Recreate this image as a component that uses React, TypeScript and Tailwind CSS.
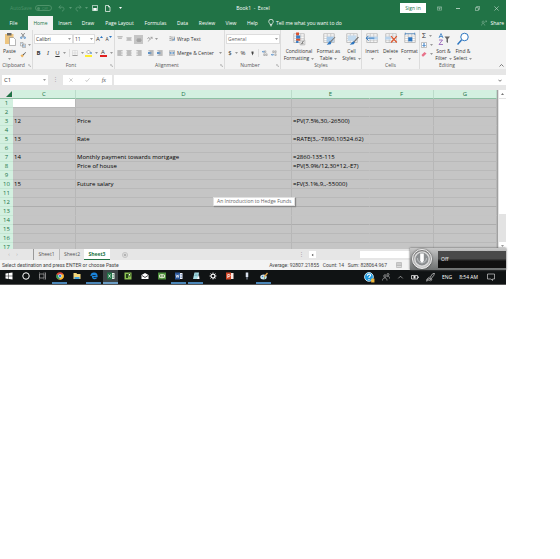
import type { ReactNode } from "react";

const rows: { c?: string; d?: string; e?: string; line: string }[] = [
  { line: "border-[#b9b9b9]" },
  { line: "border-[#b2b2b2]" },
  { c: "12", d: "Price", e: "=PV(7.5%,30,-26500)", line: "border-[#c4c4c4]" },
  { line: "border-[#b2b2b2]" },
  { c: "13", d: "Rate", e: "=RATE(3,,-7890,10524.62)", line: "border-[#b9b9b9]" },
  { line: "border-[#b9b9b9]" },
  { c: "14", d: "Monthly payment towards mortgage", e: "=2860-135-115", line: "border-[#b9b9b9]" },
  { d: "Price of house", e: "=PV(5.9%/12,30*12,-E7)", line: "border-[#b9b9b9]" },
  { line: "border-[#b9b9b9]" },
  { c: "15", d: "Future salary", e: "=FV(3.1%,9,,-55000)", line: "border-[#b9b9b9]" },
  { line: "border-[#b9b9b9]" },
  { line: "border-[#adadad]" },
  { line: "border-[#c4c4c4]" },
  { line: "border-[#adadad]" },
  { line: "border-[#b9b9b9]" },
  { line: "border-[#b9b9b9]" },
  { line: "border-[#b9b9b9]" },
];

function Svg({ className, box, children }: { className: string; box: string; children: ReactNode }) {
  return (
    <svg aria-hidden="true" viewBox={box} className={`shrink-0 ${className}`} fill="none">
      {children}
    </svg>
  );
}

function Caret({ className = "text-[#999]" }: { className?: string }) {
  return (
    <Svg box="0 0 6 4" className={`h-[2px] w-[3px] ${className}`}>
      <path d="M0 0h6L3 4z" fill="currentColor" />
    </Svg>
  );
}

function Btn({ label, className = "", spread, children }: { label?: string; className?: string; spread?: boolean; children?: ReactNode }) {
  return (
    <button
      type="button"
      aria-label={label}
      className={`flex shrink-0 items-center whitespace-nowrap ${spread ? "justify-between" : "justify-center"} ${className}`}
    >
      {children}
    </button>
  );
}

function Group({ name, className, launcher, children }: { name: string; className: string; launcher?: boolean; children: ReactNode }) {
  return (
    <section aria-label={name} className={`flex flex-col border-[#dcdcdc] ${className}`}>
      <div className="h-[31px]">{children}</div>
      <div className="flex h-2 items-center">
        <span className="flex-1 text-center text-[#555]">{name}</span>
        {launcher && (
          <Btn label={`${name} settings`} className="w-[5px]">
            <Svg box="0 0 6 6" className="size-[3px]">
              <path d="M.5 4V.5H4M2 2l3 3M5.500 3v2.500H3" stroke="#999" />
            </Svg>
          </Btn>
        )}
      </div>
    </section>
  );
}

function Big({ icon, first, second, className }: { icon: ReactNode; first: string; second?: string; className: string }) {
  return (
    <button type="button" className={`flex shrink-0 flex-col items-center whitespace-nowrap pt-[2px] text-[#333] ${className}`}>
      {icon}
      <span className="mt-[2px] leading-[7px]">{first}</span>
      <span className="flex h-[7px] items-center gap-[2px] leading-[7px]">
        {second}
        <Caret />
      </span>
    </button>
  );
}

function AlignIcon({ kind, blue }: { kind: "top" | "mid" | "bottom" | "left" | "center" | "right"; blue?: boolean }) {
  const paths = {
    top: "M1 2h14M3 6h10",
    mid: "M1 5h14M3 8h10M1 11h14",
    bottom: "M3 8h10M1 11h14M3 14h10",
    left: "M1 2h14M1 5h10M1 8h14M1 11h10M1 14h14",
    center: "M1 2h14M3 5h10M1 8h14M3 11h10M1 14h14",
    right: "M1 2h14M5 5h10M1 8h14M5 11h10M1 14h14",
  };
  return (
    <Svg box="0 0 16 16" className="size-[6px]">
      <path d={paths[kind]} stroke="#777" strokeWidth="1.500" />
      {blue && <path d="M9 8H1m3-3L1 8l3 3" stroke="#2b75c0" strokeWidth="2.500" />}
    </Svg>
  );
}

function Sheet({ children }: { children?: ReactNode }) {
  return (
    <Svg box="0 0 24 24" className="size-[14px]">
      <path d="M3 3h18v15H3z" fill="#fff" stroke="#aaa" strokeWidth="1.200" />
      <path d="M3 7h18M3 11h18M3 15h18M9 3v15M15 3v15" stroke="#b5b5b5" />
      {children}
    </Svg>
  );
}

function TitleBar() {
  return (
    <header className="flex h-4 items-center whitespace-nowrap text-white">
      <div className="flex flex-1 items-center">
        <label className="flex items-center pl-[10px] text-[#4d9269]">
          <span className="w-[25px]">AutoSave</span>
          <input type="checkbox" className="sr-only" />
          <span className="flex h-[6px] w-[17px] items-center gap-[2px] rounded-full border border-[#4d9269] px-[1px] text-[4px]">
            <span className="size-[3px] rounded-full bg-[#4d9269]" />
            Off
          </span>
        </label>
        <Btn label="Undo" className="ml-[6px] gap-[4px]">
          <Svg box="0 0 16 16" className="size-[7px]">
            <path d="M6 1 2 5l4 4M2 5h8c5 0 5 8-1 9" stroke="#5b9b76" strokeWidth="1.800" />
          </Svg>
          <Caret className="text-[#5b9b76]" />
        </Btn>
        <Btn label="Redo" className="ml-[3px] gap-[3px]">
          <Svg box="0 0 16 16" className="size-[7px]">
            <path d="m10 1 4 4-4 4m4-4H6C1 5 1 13 7 14" stroke="#5b9b76" strokeWidth="1.800" />
          </Svg>
          <Caret className="text-[#5b9b76]" />
        </Btn>
        <Btn label="Save" className="ml-[4px]">
          <Svg box="0 0 14 14" className="size-[6px]">
            <path d="M1 1h12v12H1z" stroke="#fff" strokeWidth="1.500" />
            <path d="M3 7h8v6H3z" fill="#fff" />
          </Svg>
        </Btn>
        <Btn label="New" className="ml-[6px]">
          <Svg box="0 0 14 14" className="size-[7px]">
            <path d="M3 1h6l3 3v9H3zM9 1v3h3" stroke="#fff" strokeWidth="1.400" />
          </Svg>
        </Btn>
        <Btn label="Customize toolbar" className="ml-[8px]">
          <Caret className="text-white" />
        </Btn>
      </div>
      <h1 className="whitespace-pre">Book1  -  Excel</h1>
      <div className="flex flex-1 items-center justify-end">
        <Btn className="mr-[10px] h-[10px] w-[26px] bg-white text-[#217346]">Sign in</Btn>
        <Btn label="Ribbon display" className="w-[6px]">
          <Svg box="0 0 12 12" className="size-[5px]">
            <path d="M1 2h10v8H1zM1 4.500h10M6 9V6M4.500 7 6 5.500 7.500 7" stroke="#cfe2d7" />
          </Svg>
        </Btn>
        <Btn label="Minimize" className="ml-[13px] w-[6px]">
          <span className="h-px w-[4px] bg-[#a9cbb8]" />
        </Btn>
        <Btn label="Restore" className="ml-[13px] w-[6px]">
          <Svg box="0 0 12 12" className="size-[5px]">
            <path d="M1 4h7v7H1zM4 4V1h7v7H8" stroke="#cfe2d7" strokeWidth="1.300" />
          </Svg>
        </Btn>
        <Btn label="Close" className="mr-[7px] ml-[13px] w-[6px]">
          <Svg box="0 0 12 12" className="size-[5px]">
            <path d="m1 1 10 10M11 1 1 11" stroke="#cfe2d7" strokeWidth="1.400" />
          </Svg>
        </Btn>
      </div>
    </header>
  );
}

function Tabs() {
  const tabs: [string, string][] = [
    ["File", "w-[27px]"],
    ["Home", "w-[25px]"],
    ["Insert", "w-[24px]"],
    ["Draw", "w-[22px]"],
    ["Page Layout", "w-[41px]"],
    ["Formulas", "w-[31px]"],
    ["Data", "w-[23px]"],
    ["Review", "w-[26px]"],
    ["View", "w-[22px]"],
    ["Help", "w-[21px]"],
  ];
  return (
    <nav className="flex h-[14px] items-stretch text-white">
      {tabs.map(([name, width]) => (
        <Btn
          key={name}
          className={`${width} ${name === "Home" ? "ml-px bg-[#f3f3f3] text-[#217346]" : ""}`}
        >
          {name}
        </Btn>
      ))}
      <Btn className="ml-[5px] gap-[2px]">
        <Svg box="0 0 12 16" className="h-[8px] w-[6px]">
          <path d="M4 11C4 8 1.500 8 1.500 5a4.500 4.500 0 0 1 9 0c0 3-2.500 3-2.500 6zM4 13.500h4" stroke="#fff" strokeWidth="1.500" />
        </Svg>
        Tell me what you want to do
      </Btn>
      <Btn className="mr-[2px] ml-auto gap-[4px]">
        <Svg box="0 0 14 14" className="size-[6px]">
          <circle cx="5" cy="5" r="2.500" stroke="#9fc5af" />
          <path d="M1 13c0-6 8-6 8 0M9 6l4-4m-3 0h3v3" stroke="#9fc5af" />
        </Svg>
        Share
      </Btn>
    </nav>
  );
}

function Ribbon() {
  return (
    <div className="flex h-[39px] bg-[#f3f3f3] text-[#333]">
      <Group name="Clipboard" className="w-[33px] shrink-0 border-r" launcher>
        <div className="flex">
          <Big
            className="w-[19px]"
            first="Paste"
            icon={
              <Svg box="0 0 24 28" className="h-[14px] w-[12px]">
                <path d="M2 4h17v20H2z" fill="#edc580" />
                <path d="M6 2h9v5H6z" fill="#666" />
                <path d="M11 11h8l4 4v12H11z" fill="#fff" stroke="#777" />
              </Svg>
            }
          />
          <div className="flex flex-col pt-[2px]">
            <Btn label="Cut" className="h-[8px] w-[8px]">
              <Svg box="0 0 14 14" className="size-[6px]">
                <path d="m3 0 7 10M11 0 4 10" stroke="#555" strokeWidth="1.500" />
                <circle cx="3" cy="11" r="2" stroke="#2b75c0" strokeWidth="1.500" />
                <circle cx="11" cy="11" r="2" stroke="#2b75c0" strokeWidth="1.500" />
              </Svg>
            </Btn>
            <Btn label="Copy" className="h-[10px] w-[12px] gap-[2px]">
              <Svg box="0 0 14 14" className="size-[6px]">
                <path d="M1 1h6v8H1zM6 5h7v8H6z" fill="#fff" stroke="#666" />
                <path d="M2.500 4h3M7.500 8h4m-4 2.500h4" stroke="#2b75c0" />
              </Svg>
              <Caret />
            </Btn>
            <Btn label="Format painter" className="h-[9px] w-[8px]">
              <Svg box="0 0 14 14" className="size-[6px]">
                <path d="m1 8 4-3 4 4-4 4z" fill="#edb35c" />
                <path d="m6 5 3-1 4-4 1 1-4 4-1 3z" fill="#555" />
              </Svg>
            </Btn>
          </div>
        </div>
      </Group>

      <Group name="Font" className="w-[82px] shrink-0 border-r" launcher>
        <div className="flex h-[18px] items-center pl-px">
          <Btn label="Font name" spread className="h-[10px] w-[39px] border border-[#ddd] bg-white px-px">
            Calibri <Caret />
          </Btn>
          <Btn label="Font size" spread className="h-[10px] w-[22px] border border-[#ddd] bg-white px-px">
            11 <Caret />
          </Btn>
          <Btn label="Grow font" className="w-[9px] text-[6px]">
            A<Caret className="mb-[4px] rotate-180 text-[#2b75c0]" />
          </Btn>
          <Btn label="Shrink font" className="w-[9px]">
            A<Caret className="mb-[4px] text-[#2b75c0]" />
          </Btn>
        </div>
        <div className="flex h-[10px] items-center pl-px text-[6px]">
          <Btn className="w-[9px] font-bold">B</Btn>
          <Btn className="w-[10px] font-['Liberation_Serif',serif] italic">I</Btn>
          <Btn label="Underline" className="w-[15px] gap-[3px]">
            <span className="underline">U</span>
            <Caret />
          </Btn>
          <span className="mx-px h-[8px] w-px bg-[#ddd]" />
          <Btn label="Borders" className="w-[13px] gap-[3px]">
            <Svg box="0 0 12 12" className="size-[6px]">
              <path d="M1 1h10v10H1zM6 1v10M1 6h10" stroke="#ccc" />
              <path d="M1 11h10" stroke="#888" strokeWidth="1.500" />
            </Svg>
            <Caret />
          </Btn>
          <Btn label="Fill color" className="w-[15px] gap-[3px]">
            <Svg box="0 0 14 16" className="h-[8px] w-[7px]">
              <path d="m3 6 4-4 4 4-4 4z" fill="#fff" stroke="#666" />
              <path d="M12 6v4" stroke="#2b75c0" strokeWidth="2" />
              <path d="M0 12h14v4H0z" fill="#ffed2e" />
            </Svg>
            <Caret />
          </Btn>
          <Btn label="Font color" className="w-[14px] gap-[3px]">
            <span className="flex h-[8px] w-[7px] flex-col items-center border-b-2 border-[#e02020] leading-[6px]">A</span>
            <Caret />
          </Btn>
        </div>
      </Group>

      <Group name="Alignment" className="w-[110px] shrink-0 border-r" launcher>
        <div className="flex h-[18px] items-center">
          <Btn label="Top align" className="h-[9px] w-[9px]"><AlignIcon kind="top" /></Btn>
          <Btn label="Middle align" className="h-[9px] w-[10px]"><AlignIcon kind="mid" /></Btn>
          <Btn label="Bottom align" className="h-[9px] w-[9px] bg-[#c5c5c5]"><AlignIcon kind="bottom" /></Btn>
          <Btn label="Orientation" className="ml-[3px] w-[13px] gap-[2px]">
            <Svg box="0 0 14 14" className="size-[6px]">
              <path d="m2 13 10-10M8 3h4v4M1 7l3-4 3 5" stroke="#888" strokeWidth="1.500" />
            </Svg>
            <Caret />
          </Btn>
          <Btn className="ml-[10px] gap-[2px]">
            <Svg box="0 0 14 14" className="size-[6px]">
              <path d="M1 2h4M1 6h4M1 10h4M7 1v11M12 1v7H8" stroke="#666" strokeWidth="1.300" />
              <path d="M8 10h5V4" stroke="#2b75c0" strokeWidth="1.300" />
            </Svg>
            Wrap Text
          </Btn>
        </div>
        <div className="flex h-[10px] items-center">
          <Btn label="Align left" className="w-[9px]"><AlignIcon kind="left" /></Btn>
          <Btn label="Center" className="w-[10px]"><AlignIcon kind="center" /></Btn>
          <Btn label="Align right" className="w-[9px]"><AlignIcon kind="right" /></Btn>
          <Btn label="Decrease indent" className="ml-[3px] w-[9px]"><AlignIcon kind="right" blue /></Btn>
          <Btn label="Increase indent" className="w-[9px]"><AlignIcon kind="right" blue /></Btn>
          <Btn className="ml-[5px] gap-[2px]">
            <Svg box="0 0 14 14" className="size-[6px]">
              <path d="M1 1h12v12H1zM1 4h12M1 10h12" stroke="#888" />
              <path d="M2 7h10M4 5 2 7l2 2m6-4 2 2-2 2" stroke="#2b75c0" strokeWidth="1.500" />
            </Svg>
            Merge &amp; Center
          </Btn>
          <Btn label="Merge options" className="ml-[5px]"><Caret /></Btn>
        </div>
      </Group>

      <Group name="Number" className="w-[56px] shrink-0 border-r" launcher>
        <div className="flex h-[18px] items-center pl-px">
          <Btn label="Number format" spread className="h-[10px] w-[54px] border border-[#ddd] bg-white px-px text-[#666]">
            General <Caret />
          </Btn>
        </div>
        <div className="flex h-[10px] items-center pl-[3px] text-[6px]">
          <Btn label="Currency" className="w-[10px] gap-[3px]">$<Caret /></Btn>
          <Btn className="w-[10px]">%</Btn>
          <Btn label="Comma style" className="w-[9px]">
            <Svg box="0 0 6 10" className="h-[5px] w-[3px]"><path d="M1 1h4v4L2 9V5H1z" fill="#444" /></Svg>
          </Btn>
          <span className="mx-px h-[8px] w-px bg-[#ddd]" />
          {["Increase decimal", "Decrease decimal"].map((name, i) => (
            <Btn key={name} label={name} className="w-[9px]">
              <Svg box="0 0 14 14" className="size-[6px]">
                <path d={i ? "M4 2v4h3V2zM9 2v4h3V2zM9 9v4h3V9z" : "M6 2v4h3V2zM4 9v4h3V9zM9 9v4h3V9z"} stroke="#777" />
                <path d={i ? "M1 11h6M3 9l-2 2 2 2" : "M1 4h5M3 2 1 4l2 2"} stroke="#2b75c0" strokeWidth="1.500" />
              </Svg>
            </Btn>
          ))}
        </div>
      </Group>

      <Group name="Styles" className="w-[81px] shrink-0 border-r">
        <div className="flex pl-[2px]">
          <Big
            className="w-[32px]"
            first="Conditional"
            second="Formatting"
            icon={
              <Sheet>
                <path d="M7 1h5v5H7zM7 11h7v4H7z" fill="#d9502c" />
                <path d="M7 6h7v5H7zM7 15h4v4H7z" fill="#3a7ec4" />
                <path d="M14 14h8v8h-8z" fill="#fff" stroke="#999" />
                <path d="M16 17h4m-4 3h4m0-5-4 6" stroke="#444" />
              </Sheet>
            }
          />
          <Big
            className="w-[27px]"
            first="Format as"
            second="Table"
            icon={
              <Sheet>
                <path d="M8 8h12v9H8z" fill="#a9cbea" />
                <path d="m22 8-9 9 2 1 8-9z" fill="#777" />
                <path d="m13 16-5 6 7-1 1-3z" fill="#2b75c0" />
              </Sheet>
            }
          />
          <Big
            className="w-[19px]"
            first="Cell"
            second="Styles"
            icon={
              <Sheet>
                <path d="M5 6h14v9H5z" fill="#c4dbef" />
                <path d="m22 8-8 9 2 1 8-9z" fill="#777" />
                <path d="m14 16-6 6 7-1 2-3z" fill="#2b75c0" />
              </Sheet>
            }
          />
        </div>
      </Group>

      <Group name="Cells" className="w-[58px] shrink-0 border-r">
        <div className="flex pl-[1px]">
          <Big className="w-[18px]" first="Insert" icon={<Sheet><path d="M7 8h15v5H7z" fill="#b9d4ec" /><path d="M16 10.500H2m4-4-4 4 4 4" stroke="#2b75c0" strokeWidth="1.600" /></Sheet>} />
          <Big className="w-[19px]" first="Delete" icon={<Sheet><path d="M2 8h10v5H2z" fill="#b9d4ec" /><path d="m12 7 10 11m0-11L12 18" stroke="#e0562d" strokeWidth="2" /></Sheet>} />
          <Big className="w-[19px]" first="Format" icon={<Sheet><path d="M9 9h7v7H9z" fill="#2b75c0" /><path d="M4 1v4m16-4v4M4 3h16" stroke="#2b75c0" /></Sheet>} />
        </div>
      </Group>

      <Group name="Editing" className="min-w-0 flex-1 pr-[22px]">
        <div className="flex">
          <div className="flex flex-col pt-px">
            <Btn label="AutoSum" className="h-[9px] w-[14px] gap-[3px] text-[7px]">Σ<Caret /></Btn>
            <Btn label="Fill" className="h-[9px] w-[14px] gap-[3px]">
              <Svg box="0 0 12 12" className="size-[6px]">
                <path d="M1 1h10v10H1z" fill="#fff" stroke="#888" />
                <path d="M6 2v6M3 6l3 3 3-3" stroke="#2b75c0" strokeWidth="2" />
              </Svg>
              <Caret />
            </Btn>
            <Btn label="Clear" className="h-[9px] w-[14px] gap-[3px]">
              <Svg box="0 0 12 12" className="size-[6px]">
                <path d="m1 8 6-6 4 3-6 6H3z" fill="#e8728a" />
              </Svg>
              <Caret />
            </Btn>
          </div>
          <Big
            className="w-[19px]"
            first="Sort &"
            second="Filter"
            icon={
              <Svg box="0 0 24 28" className="h-[14px] w-[12px]">
                <path d="m2 12 4-9 4 9M3 9h6" stroke="#2b75c0" strokeWidth="1.500" />
                <path d="M2 16h7L2 25h8" stroke="#8b4fb0" strokeWidth="1.500" />
                <path d="M13 9h11l-4 5v8l-3-2v-6z" fill="#666" />
              </Svg>
            }
          />
          <Big
            className="w-[20px]"
            first="Find &"
            second="Select"
            icon={
              <Svg box="0 0 24 28" className="h-[14px] w-[12px]">
                <circle cx="15" cy="10" r="7.500" fill="#fff" stroke="#2b75c0" strokeWidth="2" />
                <path d="m9 16-8 9" stroke="#2b75c0" strokeWidth="3" />
              </Svg>
            }
          />
        </div>
      </Group>
      <Btn label="Collapse ribbon" className="h-2 w-[10px] self-end">
        <Svg box="0 0 10 6" className="h-[3px] w-[5px]"><path d="m1 5 4-4 4 4" stroke="#555" strokeWidth="1.500" /></Svg>
      </Btn>
    </div>
  );
}

function FormulaBar() {
  return (
    <div className="flex h-[21px] bg-[#e6e6e6] pt-[6px] pb-[5px] pl-[2px]">
      <Btn label="Name box" spread className="w-[46px] bg-white px-[2px] text-[6px] text-[#444]">
        C1
        <Caret />
      </Btn>
      <span className="w-[15px] text-center leading-[9px] text-[#999]">⋮</span>
      <div className="flex w-[49px] items-center justify-around bg-white text-[#999]">
        <Btn label="Cancel">
          <Svg box="0 0 10 10" className="size-[4px]"><path d="m1 1 8 8M9 1 1 9" stroke="#aaa" strokeWidth="1.500" /></Svg>
        </Btn>
        <Btn label="Enter">
          <Svg box="0 0 12 10" className="h-[4px] w-[5px]"><path d="m1 5 3 4 7-8" stroke="#aaa" strokeWidth="1.500" /></Svg>
        </Btn>
        <Btn className="font-['Liberation_Serif',serif] text-[6px] text-[#555] italic">fx</Btn>
      </div>
      <input aria-label="Formula" className="ml-[2px] min-w-0 flex-1 bg-white outline-none" />
      <Btn label="Expand formula bar" className="w-[12px] bg-white">
        <Svg box="0 0 10 6" className="h-[3px] w-[4px]"><path d="m1 1 4 4 4-4" stroke="#555" strokeWidth="2" /></Svg>
      </Btn>
    </div>
  );
}

function Grid() {
  return (
    <div className="flex h-[159px] overflow-hidden bg-[#c5c5c5]">
      <table className="w-0 flex-1 table-fixed border-separate border-spacing-0 self-start border-r border-[#a0a0a0]">
        <colgroup>
          <col className="w-[13px]" />
          <col className="w-[63px]" />
          <col />
          <col className="w-[78px]" />
          <col className="w-[64px]" />
          <col className="w-[63px]" />
        </colgroup>
        <thead>
          <tr className="h-[9px] bg-[#d3f0e0] text-[#217346]">
            <th className="h-[9px] border-b border-[#8dbfa3] bg-[#e6e6e6] p-0 pr-px">
              <Svg box="0 0 6 6" className="ml-auto size-[6px]"><path d="M6 0v6H0z" fill="#217346" /></Svg>
            </th>
            {["C", "D", "E", "F", "G"].map((name) => (
              <th key={name} scope="col" className={`border-r border-b border-b-[#8dbfa3] p-0 text-[6px] leading-[8px] font-normal ${name === "E" ? "border-r-[#d3f0e0]" : "border-r-[#bcdccb]"}`}>
                {name}
              </th>
            ))}
          </tr>
        </thead>
        <tbody className="text-[6px] leading-[8px] text-black">
          {rows.map(({ c, d, e, line }, i) => (
            <tr key={i} className="h-[9px] whitespace-nowrap">
              <th scope="row" className="border-b border-[#c4e6d3] bg-[#d3f0e0] p-0 text-center font-normal text-[#217346]">
                {i + 1}
              </th>
              {[c, d, e, "", ""].map((text, k) => (
                <td
                  key={k}
                  className={`border-r border-b p-0 pl-px ${line} ${k === 2 ? "border-r-[#c5c5c5]" : "border-r-[#b7b7b7]"} ${i === 0 && k === 0 ? "bg-white" : ""}`}
                >
                  {text}
                </td>
              ))}
            </tr>
          ))}
        </tbody>
      </table>
      <div className="flex w-[8px] flex-col items-center bg-[#e3e3e3]">
        <Btn label="Scroll up" className="h-[8px] w-[7px] bg-white"><Caret className="rotate-180 text-[#777]" /></Btn>
        <div className="mt-px h-[115px] w-[7px] bg-white" />
        <Btn label="Scroll down" className="mt-auto h-[7px] w-[7px] bg-white"><Caret /></Btn>
      </div>
    </div>
  );
}

function SheetBar() {
  return (
    <div className="flex h-[11px] items-stretch bg-[#e6e6e6] text-[#555]">
      <Btn label="Previous sheet" className="ml-[5px] w-[8px] text-[#aaa]">‹</Btn>
      <Btn label="Next sheet" className="w-[8px] text-[#aaa]">›</Btn>
      <Btn className="ml-[12px] w-[26px] border-l border-[#999]">Sheet1</Btn>
      <Btn className="w-[25px] border-l border-[#bbb]">Sheet2</Btn>
      <Btn className="w-[26px] border-y border-t-white border-b-[#217346] bg-white font-bold text-[#217346]">Sheet3</Btn>
      <Btn label="New sheet" className="ml-[12px]">
        <Svg box="0 0 14 14" className="size-[6px]">
          <circle cx="7" cy="7" r="6" stroke="#999" />
          <path d="M7 4v6M4 7h6" stroke="#888" strokeWidth="1.500" />
        </Svg>
      </Btn>
      <span className="ml-auto flex items-center pr-[5px] text-[#999]">⋮</span>
      <Btn label="Scroll left" className="my-[2px] w-[7px] bg-white"><Caret className="rotate-90" /></Btn>
      <div className="my-[2px] mr-[90px] ml-[44px] w-[56px] bg-white" />
    </div>
  );
}

function StatusBar() {
  return (
    <footer className="flex h-[10px] items-center justify-between bg-[#f3f3f3] pr-[104px] pl-[2px] font-['Roboto',sans-serif] whitespace-pre text-[#444]">
      <span>Select destination and press ENTER or choose Paste</span>
      <span className="flex items-center gap-[9px]">
        Average: 92807.21855   Count: 14   Sum: 828064.967
        <Svg box="0 0 12 12" className="size-[6px]"><path d="M1 1h10v10H1zM1 4h10M1 7h10M4 1v10M8 1v10" stroke="#999" /></Svg>
      </span>
    </footer>
  );
}

function Taskbar() {
  const apps: { name: string; className?: string; icon: ReactNode }[] = [
    { name: "Start", icon: <path d="M1 3l6-1v5.500H1zM8 2l7-1v6.500H8zM1 8.500h6V14l-6-1zM8 8.500h7V15l-7-1z" fill="#fff" /> },
    { name: "Cortana", icon: <circle cx="8" cy="8" r="6.500" stroke="#fff" strokeWidth="2" /> },
    { name: "Task view", icon: <path d="M1 4h9v8H1zM1 1v2m9-2v2M1 13v2m9-2v2M13 1v14" stroke="#aaa" strokeWidth="1.500" /> },
    {
      name: "Chrome", className: "border-[#4b86b8]", icon: (
        <>
          <circle cx="8" cy="8" r="7.500" fill="#e24a35" />
          <path d="M8 8 1 5a7.500 7.500 0 0 0 6 10.500z" fill="#35a35a" />
          <path d="M8 8h-.5L7 15.500A7.500 7.500 0 0 0 15 5H8z" fill="#f4c42c" />
          <circle cx="8" cy="8" r="3.300" fill="#3c7de0" stroke="#fff" />
        </>
      ),
    },
    { name: "File Explorer", icon: <><path d="M1 2h6l1 2h7v10H1z" fill="#f5d77b" /><path d="M3 10h10v4H3z" fill="#4aa3dc" /></> },
    { name: "Edge", className: "border-[#4b86b8]", icon: <path d="M2 8C3 0 14 0 14 9H5c0 5 5 5 8 3M5 7c0-3 6-3 6 0" stroke="#1b86dd" strokeWidth="2.500" /> },
    { name: "Excel", className: "border-[#6a9cc4] bg-[#3d4446]", icon: <><path d="M7 2h8v12H7z" fill="#e7f1ea" /><path d="M0 1h10v14H0z" fill="#217346" /><path d="m3 5 4 6m0-6-4 6" stroke="#fff" strokeWidth="1.500" /><path d="M11 5h3m-3 3h3m-3 3h3" stroke="#217346" /></> },
    { name: "Notes", icon: <><path d="M1 1h14v14H1z" fill="#8cc152" /><path d="M4 4h4v8H4zM9 3h4v6H9z" fill="#24421b" /><path d="M10 4h2v3h-2z" fill="#fff" /></> },
    { name: "Mail", icon: <><path d="m1 6 7-4 7 4v8H1z" fill="#fff" /><path d="m2 7 6 4 6-4" stroke="#111" strokeWidth="1.500" /></> },
    { name: "Photos", icon: <><path d="M0 1h16v14H0z" fill="#4b8f3a" /><path d="M2 6c4-3 8-3 12 0v5c-4 2-8 2-12 0z" fill="#d6e5c5" /><path d="M4 8h3m2 0h3" stroke="#244b1a" strokeWidth="2" /></> },
    { name: "Word", className: "border-[#4b86b8]", icon: <><path d="M7 2h8v12H7z" fill="#eef2fa" /><path d="M0 1h10v14H0z" fill="#2b579a" /><path d="m2 5 1.500 6L5 6l1.500 5L8 5" stroke="#fff" strokeWidth="1.300" /><path d="M11 5h3m-3 3h3m-3 3h3" stroke="#2b579a" /></> },
    { name: "Notepad", className: "border-[#4b86b8]", icon: <><path d="M5 1h9l-2 13H2z" fill="#a7dce3" /><path d="m6 4 5 .5M5 7l6 .5" stroke="#488d9b" /><path d="m10 14 4-8 1 8z" fill="#fff" /></> },
    { name: "Settings", icon: <><circle cx="8" cy="8" r="4" stroke="#fff" strokeWidth="2.500" /><path d="M8 1v2m0 10v2M1 8h2m10 0h2M3 3l2 2m6 6 2 2m0-10-2 2m-6 6-2 2" stroke="#fff" strokeWidth="1.500" /></> },
    { name: "PowerPoint", icon: <><path d="M7 2h8v12H7z" fill="#fbe6df" /><path d="M0 1h10v14H0z" fill="#d24726" /><path d="M3.500 12V5H6a2 2 0 0 1 0 4H4" stroke="#fff" strokeWidth="1.500" /></> },
    { name: "Voice recorder", icon: <><path d="M5.500 1h5v9h-5z" fill="#d8e1ee" /><path d="M8 10v5" stroke="#9aa9bd" strokeWidth="2" /></> },
    { name: "Paint", className: "border-[#4b86b8]", icon: <><ellipse cx="7" cy="10" rx="6.500" ry="5" fill="#cfe3ee" /><circle cx="5" cy="9" r="1.500" fill="#3b8fd0" /><circle cx="9" cy="12" r="1.300" fill="#53a647" /><path d="m7 9 7-8 2 2-6 7z" fill="#e2a64b" /></> },
  ];
  return (
    <div className="flex h-[15px] items-stretch border-b border-[#555] bg-[#101314] text-white">
      {apps.map(({ name, className = "border-transparent", icon }, i) => (
        <Btn key={name} label={name} className={`border-b-2 ${i === 0 ? "w-[17px]" : "mx-px w-[15px]"} ${className}`}>
          <Svg box="0 0 16 16" className="size-[8px]">{icon}</Svg>
        </Btn>
      ))}
      <div className="ml-auto flex items-center gap-[7px] pr-[11px]">
        <Btn label="Help">
          <Svg box="0 0 20 20" className="size-[11px]">
            <circle cx="9" cy="9" r="8" fill="#1e9be0" stroke="#e5f5ff" strokeWidth="1.500" />
            <path d="M6 7c0-4 6-4 6-1 0 2-3 2-3 5m0 1.500v2" stroke="#fff" strokeWidth="2" />
            <path d="M13 12h6v7h-6z" fill="#f0b73a" />
          </Svg>
        </Btn>
        <Btn label="People">
          <Svg box="0 0 16 16" className="size-[8px]">
            <circle cx="6" cy="6" r="2.500" stroke="#ccc" strokeWidth="1.200" />
            <circle cx="12" cy="3" r="2" stroke="#ccc" strokeWidth="1.200" />
            <path d="M1 15c0-7 9-7 9 0M10 8c3-3 5-1 5 3" stroke="#ccc" strokeWidth="1.200" />
          </Svg>
        </Btn>
        <Btn label="Hidden icons">
          <Svg box="0 0 16 16" className="size-[7px]"><path d="m3 10 5-5 5 5" stroke="#ccc" strokeWidth="1.500" /></Svg>
        </Btn>
        <Btn label="Battery">
          <Svg box="0 0 16 16" className="size-[8px]"><path d="M1 5h12v7H1zM15 7v3" stroke="#eee" strokeWidth="1.500" /><path d="M5 6h4v5H5z" fill="#eee" /></Svg>
        </Btn>
        <Btn label="Pen">
          <Svg box="0 0 16 16" className="size-[9px]">
            <path d="M1 15c0-5 3-5 4-4s-2 4-3 2 2-4 4-6m0 7 8-10 1-4-4 2-5 8c4-2 6 3 2 4" stroke="#ddd" strokeWidth="1.200" />
          </Svg>
        </Btn>
        <Btn>ENG</Btn>
        <Btn>8:54 AM</Btn>
        <Btn label="Notifications" className="ml-[2px]">
          <Svg box="0 0 16 16" className="size-[8px]"><path d="M1 2h14v10h-4v3l-3-3H1z" stroke="#ddd" strokeWidth="1.300" /></Svg>
        </Btn>
      </div>
    </div>
  );
}

export default function App() {
  return (
    <div className="min-h-screen bg-white pr-[54px] font-['Open_Sans',sans-serif] text-[5px] leading-[7px]">
      <main className="relative bg-[#217346]">
        <TitleBar />
        <Tabs />
        <Ribbon />
        <FormulaBar />
        <Grid />
        <SheetBar />
        <StatusBar />
        <Taskbar />
        <div role="tooltip" className="absolute top-[197px] left-[213px] flex h-[9px] items-center border border-[#e0e0e0] bg-white px-[3px] whitespace-nowrap text-[#666] shadow-[1px_1px_1px_#888]">
          An Introduction to Hedge Funds
        </div>
        <div className="absolute right-0 bottom-[15px] flex h-[22px] w-[96px] items-center bg-linear-to-b from-[#c8c8c8] to-[#6d7070] shadow-[0_0_2px_#555]">
          <Btn label="Microphone" className="ml-[2px] size-[20px] rounded-full border border-[#eee] bg-linear-to-b from-[#777] to-[#c9c9c9] shadow-[0_0_2px_#333]">
            <Svg box="0 0 20 20" className="size-[18px]">
              <circle cx="10" cy="10" r="8" fill="#8c8f91" stroke="#ddd" strokeWidth="1.500" />
              <path d="M8 4h4v8l-2 3-2-3z" fill="#fff" />
              <path d="M5 9c0 7 10 7 10 0" stroke="#c6c9cc" />
            </Svg>
          </Btn>
          <div className="ml-[6px] flex h-[17px] flex-1 items-center bg-linear-to-b from-[#4a4a4a] from-45% to-[#111] to-60% pl-[3px] text-white">Off</div>
        </div>
      </main>
    </div>
  );
}
